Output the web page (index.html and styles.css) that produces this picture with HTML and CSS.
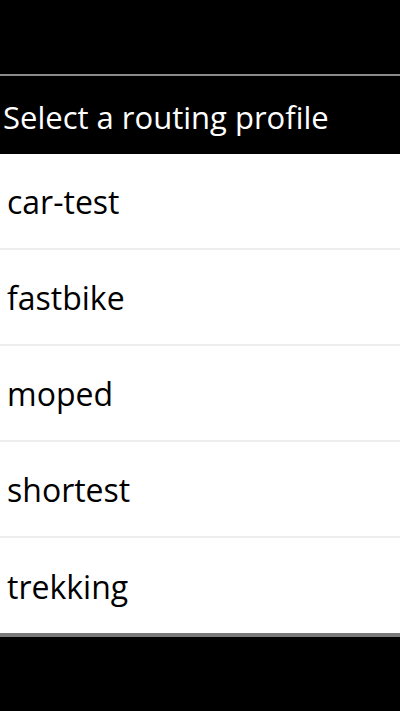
FILE: index.html
```html
<!DOCTYPE html>
<html>
<head>
  <title>Select a routing profile</title>
  <link rel="stylesheet" href="styles.css">
</head>
<body>
  <div class="status-space"></div>
  <div class="dialog">
    <div class="dialog-title">Select a routing profile</div>
    <ul class="profile-list">
      <li class="profile">car-test</li>
      <li class="profile">fastbike</li>
      <li class="profile">moped</li>
      <li class="profile">shortest</li>
      <li class="profile">trekking</li>
    </ul>
  </div>
</body>
</html>
```

FILE: styles.css
```css
body {
  margin: 0;
  background-color: black;
  font-family: "Open Sans", "DejaVu Sans", sans-serif;
}
.status-space {
  height: 74px;
}
.dialog {
  border-top: 2px solid #8a8a8a;
  border-bottom: 4px solid #7a7a7a;
}
.dialog-title {
  height: 78px;
  display: flex;
  align-items: center;
  padding-left: 3px;
  padding-top: 4px;
  box-sizing: border-box;
  color: white;
  font-size: 31px;
}
.profile-list {
  list-style: none;
  margin: 0;
  padding: 0;
  background-color: white;
}
.profile {
  height: 96px;
  display: flex;
  align-items: center;
  padding-left: 7px;
  padding-top: 1px;
  box-sizing: border-box;
  color: black;
  font-size: 32px;
  border-bottom: 2px solid #eeeeee;
}
.profile:last-child {
  height: 95px;
  border-bottom: none;
}
```
